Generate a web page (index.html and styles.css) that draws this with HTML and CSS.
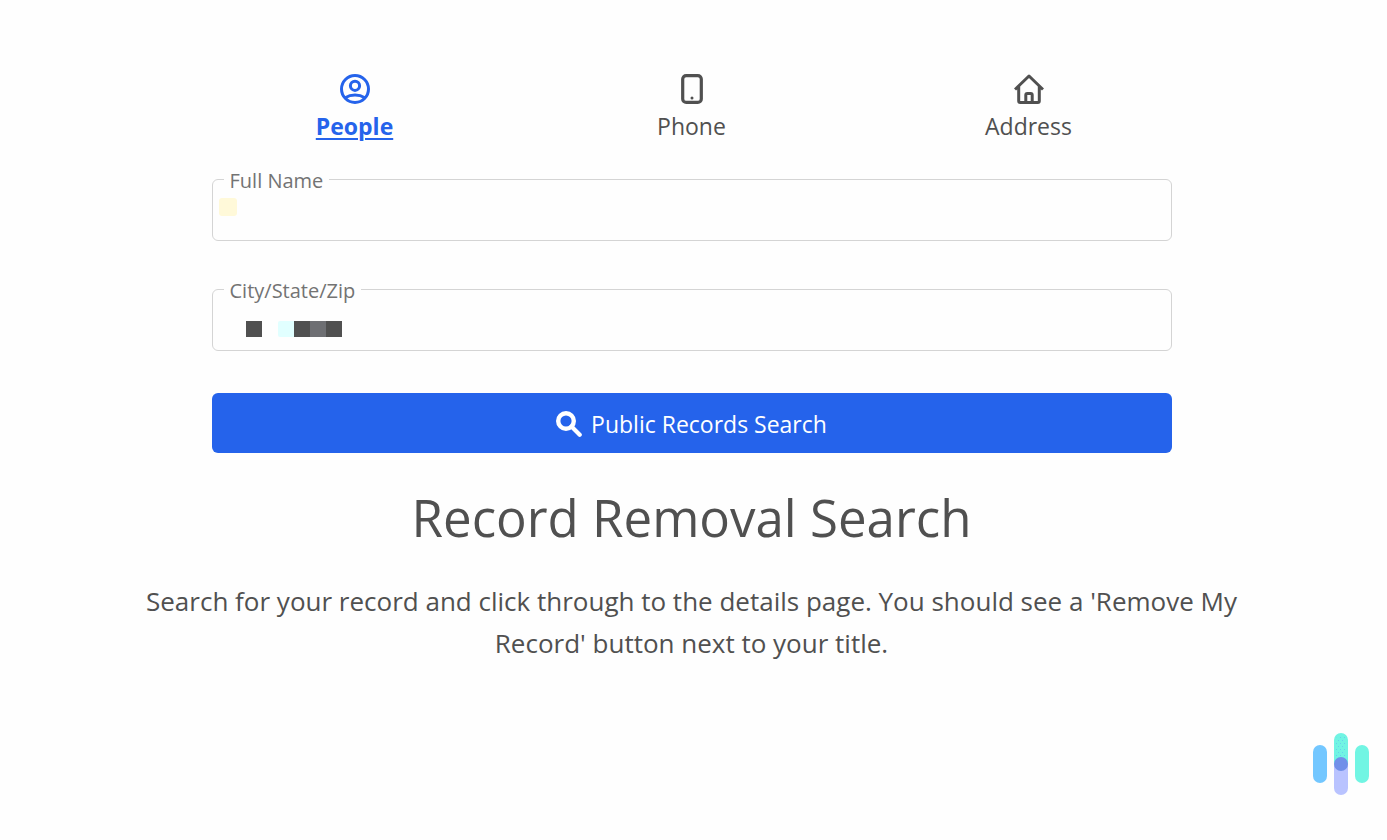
FILE: index.html
```html
<!DOCTYPE html>
<html lang="en">
<head>
<meta charset="utf-8">
<meta name="viewport" content="width=device-width, initial-scale=1">
<title>Record Removal Search</title>
<link rel="stylesheet" href="styles.css">
</head>
<body>
<main class="page">
  <nav class="tabs" aria-label="Search type">
    <a class="tab tab-active" href="#people">
      <svg class="tab-icon" viewBox="0 0 30 30" fill="none" stroke="currentColor" stroke-width="3" aria-hidden="true"><circle cx="15" cy="15" r="13.5"/><circle cx="15" cy="11.8" r="4.6"/><path d="M5.2 23.8C11 20.200 19 20.200 24.800 23.800"/></svg>
      <span>People</span>
    </a>
    <a class="tab" href="#phone">
      <svg class="tab-icon" viewBox="0 0 30 30" fill="none" stroke="currentColor" stroke-width="3" aria-hidden="true"><rect x="5.700" y="1.600" width="18.600" height="26.800" rx="3.500" stroke-width="3.200"/><circle cx="15" cy="24" r="1.500" fill="currentColor" stroke="none"/></svg>
      <span>Phone</span>
    </a>
    <a class="tab" href="#address">
      <svg class="tab-icon" viewBox="0 0 30 30" fill="none" stroke="currentColor" stroke-width="3" stroke-linejoin="round" aria-hidden="true"><path d="M1 15.500L15 2l14 13.500M4.700 12.500v14.500q0 1.500 1.500 1.500h17.600q1.500 0 1.500-1.500V12.500"/><path d="M11.800 28v-7q0-1.500 1.500-1.500h3.400q1.500 0 1.500 1.500v7"/></svg>
      <span>Address</span>
    </a>
  </nav>

  <form class="search-form">
    <fieldset class="field">
      <legend class="field-legend"><label for="name">Full Name</label></legend>
      <input class="field-input" id="name" type="text">
      <span class="highlight" aria-hidden="true"></span>
    </fieldset>
    <fieldset class="field">
      <legend class="field-legend"><label for="place">City/State/Zip</label></legend>
      <input class="field-input" id="place" type="text">
      <svg class="redaction" viewBox="0 0 96 16" aria-hidden="true"><path fill="#505050" d="M0 0h16v16H0zM48 0h16v16H48zM80 0h16v16H80z"/><path fill="#e1ffff" d="M34 0h14v16H34q-2 0-2-2V2q0-2 2-2z"/><path fill="#6e6f73" d="M64 0h16v16H64z"/></svg>
    </fieldset>
    <button class="search-button" type="button">
      <svg class="search-icon" viewBox="0 0 26 26" fill="none" stroke="currentColor" aria-hidden="true"><circle cx="10" cy="10" r="7.800" stroke-width="4.400"/><path d="M15.500 15.500l8.200 8.200" stroke-width="4.200" stroke-linecap="round"/></svg>
      <span>Public Records Search</span>
    </button>
  </form>

  <h1 class="title">Record Removal Search</h1>
  <p class="intro">Search for your record and click through to the details page. You should see a 'Remove My Record' button next to your title.</p>
</main>

<svg class="brand" viewBox="0 0 56 62" role="img" aria-label="Logo">
  <defs><pattern id="dots" width="4" height="6" patternUnits="userSpaceOnUse"><path fill="#67d0ee" d="M1 1h1v1H1zM3 4h1v1H3z"/></pattern></defs>
  <rect y="12" width="14" height="38" rx="7" fill="#73c7ff"/>
  <rect x="21" y="24" width="14" height="38" rx="7" fill="#b9c3ff"/>
  <path fill="#71f4e3" d="M21 31V7a7 7 0 0 1 14 0v24z"/>
  <path fill="url(#dots)" d="M23 27V7a5 5 0 0 1 10 0v20z"/>
  <circle cx="28" cy="31" r="7" fill="#7190e9"/>
  <rect x="42" y="12" width="14" height="38" rx="7" fill="#71f5e3"/>
</svg>
</body>
</html>
```
FILE: styles.css
```css
* { box-sizing: border-box; }

body {
  margin: 0;
  background: #fefefe;
  color: #505050;
  font-family: "Segoe UI", "Open Sans", "Noto Sans", sans-serif;
}

.page {
  display: flex;
  flex-direction: column;
  align-items: center;
  padding: 74px 4px 40px 0;
}

.tabs {
  display: grid;
  grid-template-columns: repeat(3, 1fr);
  width: 100%;
  max-width: 1011px;
}

.tab {
  display: flex;
  flex-direction: column;
  align-items: center;
  gap: 6px;
  color: #505050;
  font-size: 23px;
  line-height: 32px;
  text-decoration: none;
}

.tab-active {
  color: #2563eb;
  font-weight: 700;
  text-decoration: underline;
  text-decoration-thickness: 2px;
  text-underline-offset: 3px;
}

.tab-icon {
  width: 30px;
  height: 30px;
}

.search-form {
  width: 100%;
  max-width: 960px;
  margin-top: 23px;
}

.field {
  position: relative;
  min-width: 0;
  margin: 0 0 34px;
  padding: 0 11px;
  border: 1px solid #d4d4d4;
  border-radius: 6px;
}

.field-legend {
  padding: 4px 6px 0;
  color: #737373;
  font-size: 20px;
  line-height: 24px;
}

.field-input {
  display: block;
  width: 100%;
  height: 47px;
  padding: 0 22px;
  border: 0;
  outline: 0;
  background: transparent;
  color: inherit;
  font: inherit;
  font-size: 23px;
}

.highlight {
  position: absolute;
  bottom: 24px;
  left: 6px;
  width: 18px;
  height: 18px;
  border-radius: 3px;
  background: #fff9d9;
}

.redaction {
  position: absolute;
  bottom: 13px;
  left: 33px;
  width: 96px;
  height: 16px;
}

.search-button {
  display: flex;
  align-items: center;
  justify-content: center;
  gap: 9px;
  width: 100%;
  height: 60px;
  margin-top: 42px;
  padding: 2px 0 0;
  border: 0;
  border-radius: 6px;
  background: #2563eb;
  color: #fff;
  font: inherit;
  font-size: 23px;
}

.search-icon {
  width: 26px;
  height: 26px;
}

.title {
  margin: 24px 0 0;
  font-size: 51px;
  font-weight: 400;
  line-height: 80px;
  text-align: center;
}

.intro {
  max-width: 1120px;
  margin: 23px 0 0;
  font-size: 26px;
  line-height: 42px;
  text-align: center;
}

.brand {
  position: fixed;
  right: 18px;
  bottom: 45px;
  width: 56px;
  height: 62px;
}
```
